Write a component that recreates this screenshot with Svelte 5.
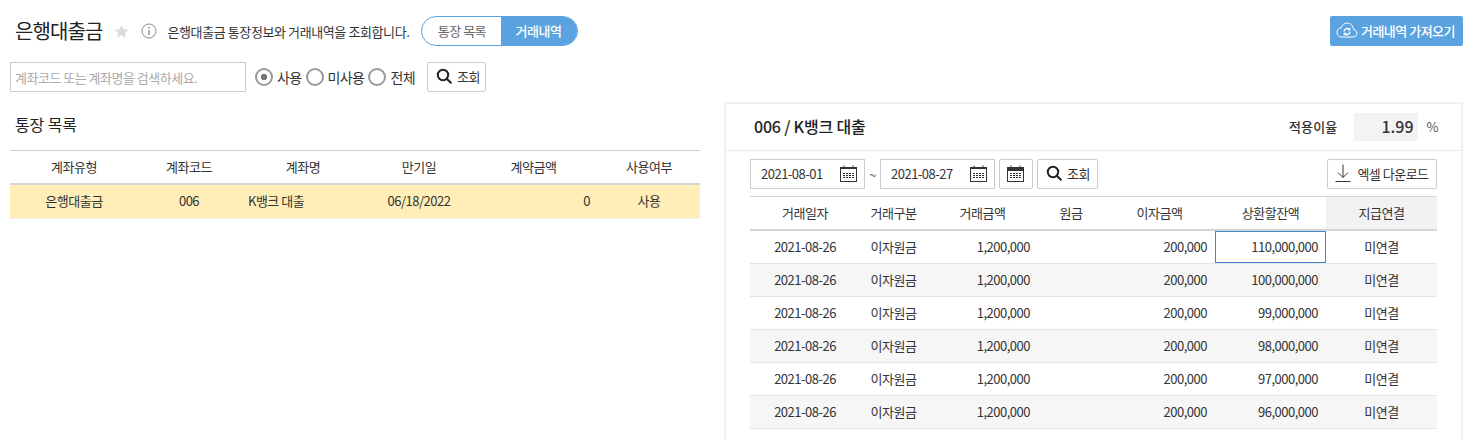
<script>
  const accounts = [
    { type: '은행대출금', code: '006', name: 'K뱅크 대출', due: '06/18/2022', amount: '0', use: '사용' }
  ];
  const balances = ['110,000,000', '100,000,000', '99,000,000', '98,000,000', '97,000,000', '96,000,000'];
</script>

{#snippet calendar(solid)}
  <svg class="cal" width="18" height="17" viewBox="0 0 18 17" fill="none">
    <rect x="0.5" y="2.5" width="16" height="14" fill="#fff" stroke="#333" />
    <rect x="0.5" y="2" width="16" height={solid ? 4 : 2} fill="#333" />
    <path d="M4 0.5v3M13 0.5v3" stroke="#333" />
    <path d="M3 8.5h11M3 10.5h11M3 12.5h11" stroke="#333" stroke-dasharray="2 1" />
  </svg>
{/snippet}

{#snippet search()}
  <svg width="16" height="16" viewBox="0 0 16 16" fill="none" stroke="#222" stroke-width="2">
    <circle cx="7" cy="7" r="5.2" />
    <path d="M10.8 10.8l4 4" stroke-linecap="round" />
  </svg>
{/snippet}

<div class="page">
  <header class="top">
    <h1>은행대출금</h1>
    <svg class="star" width="15" height="15" viewBox="0 0 24 24" fill="#dcdcdc">
      <path d="M12 1l3.4 7.3 7.9 1-5.8 5.5 1.5 7.9L12 18l-7 3.7 1.5-7.9L.7 9.3l7.9-1z" />
    </svg>
    <svg class="info" width="16" height="16" viewBox="0 0 16 16" fill="none" stroke="#8c8c8c">
      <circle cx="8" cy="8" r="7" />
      <path d="M8 7v5" stroke-width="1.4" />
      <path d="M8 4v1.6" stroke-width="1.4" />
    </svg>
    <p class="desc">은행대출금 통장정보와 거래내역을 조회합니다.</p>
    <div class="toggle">
      <span class="seg">통장 목록</span>
      <span class="seg on">거래내역</span>
    </div>
    <button class="import" type="button">
      <svg width="22" height="16" viewBox="0 0 22 16" fill="none" stroke="#fff">
        <path d="M5 15h12c2.500 0 4-1.700 4-3.700 0-2-1.500-3.500-3.500-3.600C17.200 3.800 14.500 1 11.200 1 8.300 1 6 3 5.400 5.600 2.800 5.700 1 7.700 1 10.200 1 13 2.800 15 5 15z" />
        <path d="M8 9.500a3.200 3.200 0 0 1 5.500-2M14 9.500a3.200 3.200 0 0 1-5.500 2.200" stroke-width="1.300" />
        <path d="M13.900 5.800v2.200h-2.200M8.100 13.400v-2.200h2.200" />
      </svg>
      거래내역 가져오기
    </button>
  </header>

  <div class="filter">
    <input class="keyword" type="text" placeholder="계좌코드 또는 계좌명을 검색하세요." />
    <div class="radios">
      <span class="radio"><i class="dot checked"></i>사용</span>
      <span class="radio"><i class="dot"></i>미사용</span>
      <span class="radio"><i class="dot"></i>전체</span>
    </div>
    <button class="btn" type="button">{@render search()}조회</button>
  </div>

  <div class="cols">
    <section class="left">
      <h2>통장 목록</h2>
      <table class="accounts">
        <thead>
          <tr><th>계좌유형</th><th>계좌코드</th><th>계좌명</th><th>만기일</th><th>계약금액</th><th>사용여부</th></tr>
        </thead>
        <tbody>
          {#each accounts as a}
            <tr>
              <td>{a.type}</td>
              <td>{a.code}</td>
              <td class="l">{a.name}</td>
              <td>{a.due}</td>
              <td class="r">{a.amount}</td>
              <td>{a.use}</td>
            </tr>
          {/each}
        </tbody>
      </table>
    </section>

    <section class="detail">
      <div class="detail-head">
        <h3>006 / K뱅크 대출</h3>
        <span class="rate-label">적용이율</span>
        <span class="rate">1.99</span>
        <span class="pct">%</span>
      </div>
      <div class="detail-body">
        <div class="tools">
          <div class="date">2021-08-01{@render calendar(false)}</div>
          <span class="tilde">~</span>
          <div class="date">2021-08-27{@render calendar(false)}</div>
          <button class="btn cal-btn" type="button">{@render calendar(true)}</button>
          <button class="btn" type="button">{@render search()}조회</button>
          <button class="btn excel" type="button">
            <svg width="16" height="18" viewBox="0 0 16 18" fill="none" stroke="#333">
              <path d="M8 0.500v13M3 8.500l5 5 5-5M0.500 17.500h15" />
            </svg>
            엑셀 다운로드
          </button>
        </div>
        <table class="history">
          <thead>
            <tr><th>거래일자</th><th>거래구분</th><th>거래금액</th><th>원금</th><th>이자금액</th><th>상환할잔액</th><th class="link">지급연결</th></tr>
          </thead>
          <tbody>
            {#each balances as b, i}
              <tr>
                <td>2021-08-26</td>
                <td>이자원금</td>
                <td class="r">1,200,000</td>
                <td></td>
                <td class="r">200,000</td>
                <td class="r" class:focus={i === 0}>{b}</td>
                <td>미연결</td>
              </tr>
            {/each}
          </tbody>
        </table>
      </div>
    </section>
  </div>
</div>

<style>
  :global(body) {
    margin: 0;
    background: #fff;
    overflow: hidden;
  }
  .page {
    height: 440px;
    overflow: hidden;
    padding: 16px 8px 0 10px;
    box-sizing: border-box;
    font-family: "Noto Sans CJK KR", "Noto Sans", sans-serif;
    font-size: 13px;
    letter-spacing: -0.5px;
    color: #333;
  }
  .top {
    display: flex;
    align-items: center;
    height: 30px;
  }
  h1 {
    margin: 0 0 2px 5px;
    font-size: 20px;
    font-weight: 400;
    letter-spacing: -0.9px;
    color: #222;
  }
  .star { margin-left: 11px; }
  .info { margin-left: 12px; }
  .desc {
    margin: 0 0 0 11px;
    letter-spacing: -0.4px;
  }
  .toggle {
    display: flex;
    margin-left: 12px;
    height: 30px;
    box-sizing: border-box;
    border: 1px solid #5ba3e0;
    border-radius: 15px;
    overflow: hidden;
  }
  .seg {
    display: flex;
    align-items: center;
    justify-content: center;
    width: 79px;
    padding-bottom: 2px;
    box-sizing: border-box;
    color: #666;
  }
  .seg.on {
    width: 76px;
    padding-right: 2px;
    background: #5ba3e0;
    color: #fff;
    font-weight: 500;
  }
  .import {
    display: flex;
    align-items: center;
    gap: 3px;
    margin-left: auto;
    height: 30px;
    width: 133px;
    box-sizing: border-box;
    justify-content: center;
    padding: 0 2px 2px 0;
    border: 0;
    border-radius: 2px;
    background: #5ba3e0;
    color: #fff;
    font: inherit;
    letter-spacing: -0.5px;
    font-weight: 500;
  }
  .filter {
    display: flex;
    align-items: center;
    margin-top: 16px;
    height: 30px;
  }
  .keyword {
    width: 236px;
    height: 30px;
    box-sizing: border-box;
    padding: 0 4px;
    border: 1px solid #ccc;
    outline: 0;
    font: inherit;
    letter-spacing: -0.5px;
  }
  .keyword::placeholder { color: #aaa; }
  .radios {
    display: flex;
    margin-left: 9px;
    gap: 4px;
  }
  .radio {
    display: flex;
    align-items: center;
    gap: 4px;
    font-size: 14px;
    letter-spacing: -0.6px;
  }
  .dot {
    width: 18px;
    height: 18px;
    box-sizing: border-box;
    border: 2px solid #999;
    border-radius: 50%;
    background: #fff;
  }
  .dot.checked {
    background: radial-gradient(circle, #777 0 3px, #fff 3.500px);
  }
  .btn {
    display: inline-flex;
    align-items: center;
    justify-content: center;
    gap: 5px;
    height: 30px;
    box-sizing: border-box;
    padding: 0 5px 2px 8px;
    border: 1px solid #ccc;
    border-radius: 2px;
    background: #fff;
    color: #333;
    font: inherit;
    letter-spacing: -0.5px;
  }
  .filter .btn { margin-left: 12px; }
  .cols {
    display: flex;
    gap: 24px;
    margin-top: 10px;
  }
  .left { width: 690px; }
  h2 {
    margin: 0;
    padding: 10px 0 0 5px;
    height: 48px;
    box-sizing: border-box;
    font-size: 16px;
    font-weight: 400;
    letter-spacing: -0.1px;
    color: #222;
  }
  table {
    border-collapse: collapse;
    table-layout: fixed;
  }
  th { font-weight: 400; padding: 0 0 2px; }
  td { padding: 0 0 2px; text-align: center; }
  td.r { text-align: right; padding-right: 8px; }
  td.l { text-align: left; padding-left: 8px; }
  .accounts { width: 690px; }
  .accounts th {
    height: 30px;
    border-top: 1px solid #ccc;
    border-bottom: 2px solid #d4d4d4;
  }
  .accounts td {
    height: 31px;
    background: #ffeeb8;
    border-bottom: 1px solid #eee;
  }
  .accounts th:nth-child(1) { width: 128px; }
  .accounts th:nth-child(2) { width: 102px; }
  .accounts th:nth-child(3) { width: 126px; }
  .accounts th:nth-child(4) { width: 106px; }
  .accounts th:nth-child(5) { width: 123px; padding-right: 3px; }
  .detail {
    width: 739px;
    height: 340px;
    box-sizing: border-box;
    border: 2px solid #f0f0f0;
    background: #fff;
  }
  .detail-head {
    display: flex;
    align-items: center;
    box-sizing: border-box;
    height: 47px;
    padding-left: 28px;
    border-bottom: 1px solid #eaeaea;
  }
  h3 {
    margin: 0 0 2px;
    flex: 1;
    font-size: 16px;
    font-weight: 500;
    letter-spacing: -0.2px;
    color: #222;
  }
  .rate-label {
    margin: 0 16px 2px 0;
    font-size: 13px;
    font-weight: 500;
    letter-spacing: 0.2px;
  }
  .rate {
    width: 64px;
    height: 28px;
    box-sizing: border-box;
    padding-right: 4px;
    line-height: 27px;
    text-align: right;
    background: #f3f3f3;
    font-size: 16px;
    font-weight: 500;
    letter-spacing: 0;
  }
  .pct {
    margin: 0 23px 2px 9px;
    font-size: 13px;
    color: #555;
  }
  .detail-body { padding: 8px 0 0 24px; width: 687px; }
  .tools {
    display: flex;
    align-items: center;
    height: 30px;
  }
  .tools .btn { padding-right: 7px; }
  .date {
    display: flex;
    align-items: center;
    justify-content: space-between;
    width: 115px;
    height: 30px;
    box-sizing: border-box;
    padding: 0 6px 2px 10px;
    border: 1px solid #ccc;
    letter-spacing: -0.5px;
  }
  .tilde { width: 15px; text-align: center; color: #666; }
  .tools .cal-btn { width: 34px; padding: 0 0 2px; margin-left: 4px; }
  .cal-btn + .btn { margin-left: 4px; }
  .tools .excel { margin-left: auto; width: 110px; padding: 0 0 2px; gap: 6px; }
  .history { width: 687px; margin-top: 7px; }
  .history th {
    height: 30px;
    border-top: 1px solid #d4d4d4;
    border-bottom: 2px solid #d4d4d4;
  }
  .history th.link { background: #f2f2f2; }
  .history td {
    height: 30px;
    border-bottom: 1px solid #e4e4e4;
  }
  .history tr:nth-child(even) td { background: #f6f6f6; }
  .history td.focus { box-shadow: inset 0 0 0 1px #3f86cc; }
  .history th:nth-child(1) { width: 110px; }
  .history th:nth-child(2) { width: 67px; }
  .history th:nth-child(3) { width: 111px; }
  .history th:nth-child(4) { width: 66px; }
  .history th:nth-child(5) { width: 111px; }
  .history th:nth-child(6) { width: 111px; }
</style>
